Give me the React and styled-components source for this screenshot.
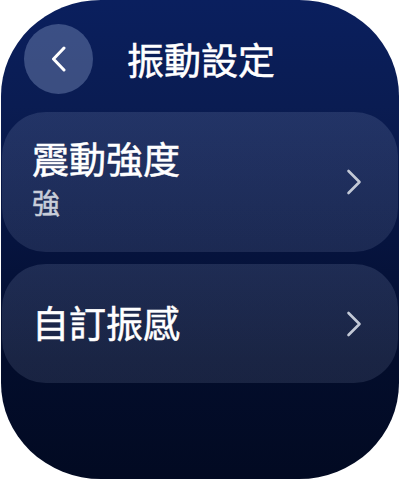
import React from 'react';
import styled, { createGlobalStyle } from 'styled-components';

const GlobalStyle = createGlobalStyle`
  html, body {
    margin: 0;
    padding: 0;
    background: #ffffff;
  }
  body {
    font-family: "Noto Sans CJK TC", "Noto Sans", sans-serif;
  }
`;

const Page = styled.div`
  width: 400px;
  height: 480px;
  padding: 0 1px;
  box-sizing: border-box;
  background: #ffffff;
`;

const Screen = styled.div`
  height: 479px;
  border-radius: 100px / 96px;
  overflow: hidden;
  background: linear-gradient(180deg, #0a1f5e 0%, #0a1c52 22%, #06143f 50%, #030d2c 75%, #020a22 100%);
  display: flex;
  flex-direction: column;
`;

const Header = styled.div`
  display: flex;
  align-items: center;
  gap: 34px;
  padding: 24px 0 0 23px;
`;

const BackButton = styled.button`
  width: 69px;
  height: 70px;
  border: none;
  border-radius: 50%;
  background: rgba(120, 140, 185, 0.45);
  display: flex;
  align-items: center;
  justify-content: center;
  padding: 0;
  cursor: pointer;
`;

const Title = styled.h1`
  margin: 0;
  color: #ffffff;
  font-size: 37px;
  font-weight: 400;
  line-height: 70px;
  -webkit-text-stroke: 0.5px #ffffff;
`;

const List = styled.div`
  display: flex;
  flex-direction: column;
  gap: 12px;
  padding: 18px 1px 0;
`;

const Card = styled.div`
  height: ${(p) => p.$height}px;
  border-radius: 44px;
  background: linear-gradient(180deg, rgba(175, 190, 225, 0.15), rgba(175, 190, 225, 0.13));
  display: flex;
  align-items: center;
  justify-content: space-between;
  padding: 0 36px 0 30px;
  box-sizing: border-box;
`;

const Texts = styled.div`
  display: flex;
  flex-direction: column;
  margin-bottom: ${(p) => p.$lift}px;
`;

const ItemTitle = styled.div`
  color: #ffffff;
  font-size: 37px;
  font-weight: 400;
  line-height: 46px;
  -webkit-text-stroke: 0.5px #ffffff;
`;

const ItemValue = styled.div`
  color: #c8cdd9;
  font-size: 28px;
  font-weight: 400;
  line-height: 42px;
  -webkit-text-stroke: 0.5px #c8cdd9;
`;

const Chevron = ({ color = '#c3c9d6', width = 2.6 }) => (
  <svg width="16" height="26" viewBox="0 0 16 26" fill="none">
    <path d="M2.5 2 L13.5 13 L2.5 24" stroke={color} strokeWidth={width} strokeLinecap="round" strokeLinejoin="round" />
  </svg>
);

const BackIcon = () => (
  <svg width="16" height="26" viewBox="0 0 16 26" fill="none">
    <path d="M13 2 L2.5 13 L13 24" stroke="#ffffff" strokeWidth="3" strokeLinecap="round" strokeLinejoin="round" />
  </svg>
);

const items = [
  { title: '震動強度', value: '強', height: 140, lift: 7 },
  { title: '自訂振感', height: 119, lift: 3 },
];

export default function App() {
  return (
    <>
      <GlobalStyle />
      <Page>
        <Screen>
          <Header>
            <BackButton aria-label="back">
              <BackIcon />
            </BackButton>
            <Title>振動設定</Title>
          </Header>
          <List>
            {items.map((item) => (
              <Card key={item.title} $height={item.height}>
                <Texts $lift={item.lift}>
                  <ItemTitle>{item.title}</ItemTitle>
                  {item.value && <ItemValue>{item.value}</ItemValue>}
                </Texts>
                <Chevron />
              </Card>
            ))}
          </List>
        </Screen>
      </Page>
    </>
  );
}
